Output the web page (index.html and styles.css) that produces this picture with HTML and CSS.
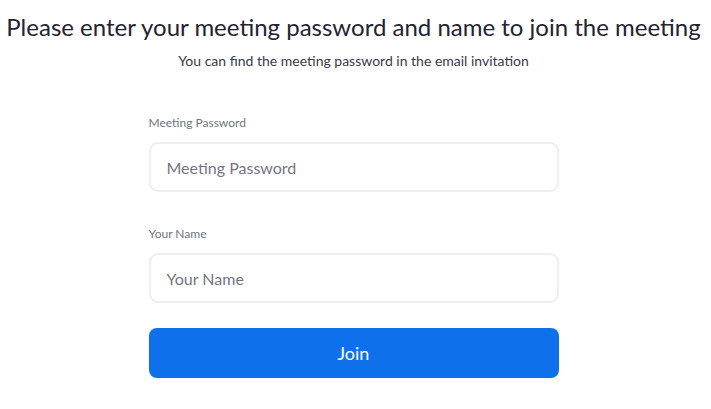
FILE: index.html
```html
<!DOCTYPE html>
<html lang="en">

<head>
    <meta charset="UTF-8">
    <meta name="viewport" content="width=device-width, initial-scale=1.0">
    <title>Join Meeting</title>
    <link rel="stylesheet" href="styles.css">
</head>

<body>
    <div class="page">
        <h1 class="title">Please enter your meeting password and name to join the meeting</h1>
        <p class="subtitle">You can find the meeting password in the email invitation</p>

        <form class="join-form" onsubmit="return false;">
            <div class="field">
                <label class="field-label" for="pwd">Meeting Password</label>
                <input class="field-input" id="pwd" type="password" placeholder="Meeting Password">
            </div>

            <div class="field">
                <label class="field-label" for="name">Your Name</label>
                <input class="field-input" id="name" type="text" placeholder="Your Name">
            </div>

            <button class="join-btn" type="submit">Join</button>
        </form>
    </div>
</body>

</html>
```

FILE: styles.css
```css
body {
    margin: 0;
    font-family: Lato, 'Open Sans', sans-serif;
    background: #ffffff;
    color: #232333;
}

.page {
    display: flex;
    flex-direction: column;
    align-items: center;
    padding: 12px 4px 0 0;
}

.title {
    margin: 0;
    font-size: 24px;
    font-weight: 400;
    line-height: 30px;
    color: #232333;
    white-space: nowrap;
}

.subtitle {
    margin: 10px 0 0;
    font-size: 14px;
    line-height: 18px;
    color: #39394d;
}

.join-form {
    width: 410px;
    margin-top: 45px;
    display: flex;
    flex-direction: column;
}

.field {
    display: flex;
    flex-direction: column;
}

.field + .field {
    margin-top: 34px;
}

.field-label {
    font-size: 12px;
    line-height: 16px;
    color: #6e7680;
    margin-bottom: 11px;
}

.field-input {
    box-sizing: border-box;
    height: 50px;
    padding: 0 16px;
    border: 2px solid #ededf4;
    border-radius: 9px;
    font-family: inherit;
    font-size: 16px;
    color: #232333;
    outline: none;
}

.field-input::placeholder {
    color: #747487;
}

.join-btn {
    height: 50px;
    margin-top: 25px;
    border: none;
    border-radius: 8px;
    background: #0e71eb;
    color: #ffffff;
    font-family: inherit;
    font-size: 18px;
    cursor: pointer;
}
```
